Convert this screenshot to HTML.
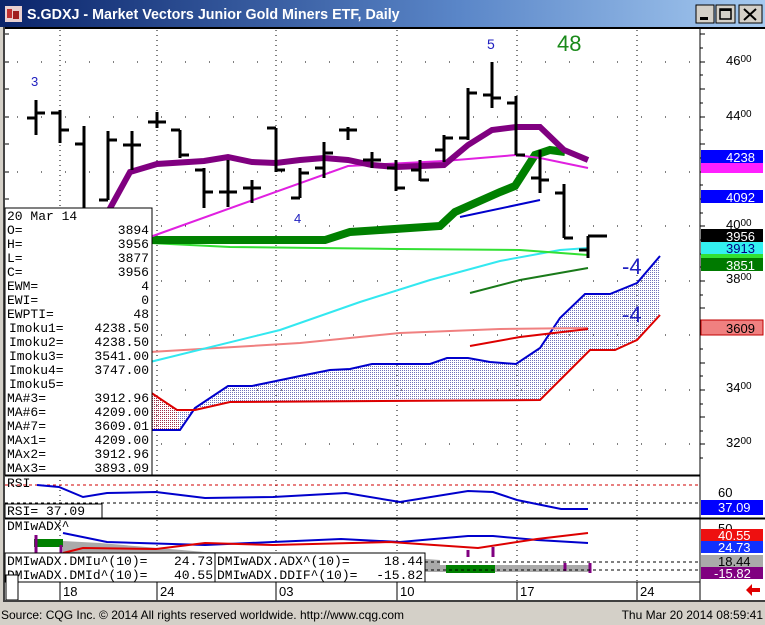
<!DOCTYPE html>
<html><head><meta charset="utf-8"><style>
html,body{margin:0;padding:0;background:#d4d0c8;}
svg{display:block}
text{font-family:"Liberation Sans",sans-serif;}
.m, .m text{font-family:"Liberation Mono",monospace;font-size:13px;fill:#000}
</style></head><body>
<svg width="765" height="625" viewBox="0 0 765 625" xmlns="http://www.w3.org/2000/svg">
<defs>
<linearGradient id="tb" x1="0" x2="1"><stop offset="0" stop-color="#0a246a"/><stop offset="0.6" stop-color="#5a86c8"/><stop offset="1" stop-color="#a6caf0"/></linearGradient>
<pattern id="dots" width="2" height="2" patternUnits="userSpaceOnUse"><rect width="1" height="1" fill="#000080"/></pattern>
<pattern id="rdots" width="2" height="2" patternUnits="userSpaceOnUse"><rect width="1" height="1" fill="#c00000"/></pattern>
</defs>
<rect width="765" height="625" fill="#d4d0c8"/>
<rect x="0" y="0" width="765" height="27" fill="url(#tb)"/>
<rect x="5" y="6" width="17" height="16" fill="#e8d0d0"/><rect x="7" y="9" width="5" height="9" fill="#c03030"/><rect x="13" y="11" width="6" height="8" fill="#a02020"/>
<text x="27" y="19" font-size="14.3" font-weight="bold" fill="#fff">S.GDXJ - Market Vectors Junior Gold Miners ETF, Daily</text>
<g stroke="#000" stroke-width="1">
<rect x="696" y="5" width="18" height="18" fill="#d4d0c8"/>
<rect x="716" y="5" width="19" height="18" fill="#d4d0c8"/>
<rect x="739" y="5" width="23" height="18" fill="#d4d0c8"/>
</g>
<rect x="700" y="17" width="8" height="3" fill="#000"/>
<rect x="720" y="9" width="11" height="10" fill="none" stroke="#000" stroke-width="1.5"/><rect x="720" y="9" width="11" height="2" fill="#000"/>
<path d="M744 9 L756 20 M756 9 L744 20" stroke="#000" stroke-width="2"/>
<rect x="3" y="27" width="762" height="575" fill="#fff"/>
<rect x="3" y="27" width="2" height="575" fill="#444"/>
<line x1="5" y1="28" x2="765" y2="28" stroke="#000" stroke-width="2"/>
<line x1="700" y1="28" x2="700" y2="600" stroke="#000" stroke-width="1"/>
<g stroke="#000" stroke-width="1" stroke-dasharray="1,4">
<line x1="60" y1="30" x2="60" y2="600"/><line x1="157" y1="30" x2="157" y2="600"/><line x1="276" y1="30" x2="276" y2="600"/><line x1="397" y1="30" x2="397" y2="600"/><line x1="517" y1="30" x2="517" y2="600"/><line x1="637" y1="30" x2="637" y2="600"/>
</g>
<g stroke="#000" stroke-width="1" stroke-dasharray="1,23" stroke-dashoffset="-12">
<line x1="5" y1="62" x2="700" y2="62"/><line x1="5" y1="117" x2="700" y2="117"/><line x1="5" y1="172" x2="700" y2="172"/><line x1="5" y1="226" x2="700" y2="226"/><line x1="5" y1="281" x2="700" y2="281"/><line x1="5" y1="335" x2="700" y2="335"/><line x1="5" y1="390" x2="700" y2="390"/><line x1="5" y1="444" x2="700" y2="444"/>
</g>
<g stroke="#000" stroke-width="1">
<path d="M700 34h5M700 48h3M700 62h5M700 75h3M700 89h5M700 103h3M700 117h5M700 130h3M700 144h5M700 158h3M700 172h5M700 185h3M700 199h5M700 213h3M700 226h5M700 240h3M700 254h5M700 267h3M700 281h5M700 295h3M700 308h5M700 322h3M700 335h5M700 349h3M700 363h5M700 376h3M700 390h5M700 404h3M700 417h5M700 431h3M700 444h5M700 458h3"/>
<path d="M5 34h4M5 62h4M5 89h4M5 117h4M5 144h4M5 172h4M5 199h4"/>
</g>
<polygon points="150,392 177,410 195,410 230,402 540,400 560,380 590,350 615,350 637,340 660,315 660,256 637,283 610,294 585,294 560,318 540,348 516,364 490,362 468,358 447,358 430,364 372,364 350,369 330,370 300,376 252,386 228,386 195,408 180,430 150,430" fill="url(#dots)" opacity="0.55"/>
<polygon points="150,392 177,410 180,430 150,430" fill="url(#rdots)" opacity="0.6"/>
<polyline points="150,430 180,430 195,408 228,386 252,386 300,376 330,370 350,369 372,364 430,364 447,358 468,358 490,362 516,364 540,348 560,318 585,294 610,294 637,283 660,256" fill="none" stroke="#0000cc" stroke-width="2"/>
<polyline points="150,392 177,410 195,410 230,402 540,400 560,380 590,350 615,350 637,340 660,315" fill="none" stroke="#dd0000" stroke-width="2"/>
<polyline points="150,352 300,343 400,333 500,329 588,328" fill="none" stroke="#f08080" stroke-width="2"/>
<polyline points="470,346 520,337 588,329" fill="none" stroke="#dd0000" stroke-width="2"/>
<polyline points="150,362 280,330 360,302 430,280 500,261 560,250 588,248" fill="none" stroke="#33e8f0" stroke-width="2"/>
<polyline points="470,293 520,280 588,268" fill="none" stroke="#1a7a1a" stroke-width="2"/>
<polyline points="150,243 230,247 400,249 520,250 588,255" fill="none" stroke="#33e033" stroke-width="2"/>
<polyline points="150,240 325,240 350,232 440,226 455,212 500,192 515,186 535,155 550,150 565,152" fill="none" stroke="#008000" stroke-width="8"/>
<polyline points="460,217 540,200" fill="none" stroke="#0000cc" stroke-width="2"/>
<polyline points="150,237 348,166 444,161 516,155 540,158 588,168" fill="none" stroke="#e020e0" stroke-width="2"/>
<polyline points="108,212 130,172 157,164 204,161 228,157 252,162 276,163 300,160 324,158 348,160 372,165 396,167 444,165 468,145 492,130 516,127 540,127 564,150 588,160" fill="none" stroke="#800080" stroke-width="6"/>
<g stroke="#000" stroke-width="3" fill="none">
<path d="M36 100V135M27 118H36M36 113H45"/>
<path d="M60 110V143M51 113H60M60 130H69"/>
<path d="M84 126V210M75 144H84"/>
<path d="M108 131V200M99 200H108M108 140H117"/>
<path d="M132 131V170M123 145H132M132 145H141"/>
<path d="M157 112V128M148 122H157M157 122H166"/>
<path d="M180 130V158M171 130H180M180 155H189"/>
<path d="M204 168V208M195 170H204M204 192H213"/>
<path d="M228 160V207M219 192H228M228 192H237"/>
<path d="M252 180V203M243 188H252M252 188H261"/>
<path d="M276 128V172M267 128H276M276 170H285"/>
<path d="M300 168V198M291 198H300M300 173H309"/>
<path d="M324 142V178M315 168H324M324 153H333"/>
<path d="M348 127V140M339 130H348M348 130H357"/>
<path d="M372 152V168M363 160H372M372 160H381"/>
<path d="M396 160V191M387 168H396M396 188H405"/>
<path d="M420 160V181M411 170H420M420 180H429"/>
<path d="M444 135V162M435 150H444M444 138H453"/>
<path d="M468 88V140M459 138H468M468 93H477"/>
<path d="M492 62V108M483 95H492M492 98H501"/>
<path d="M516 96V155M507 103H516M516 155H525"/>
<path d="M540 150V193M531 178H540M540 180H549"/>
<path d="M564 184V238M555 193H564M564 238H573"/>
<path d="M588 236V258M579 250H588M588 236H607"/>
</g>
<text x="31" y="86" font-size="13" fill="#2020c0">3</text>
<text x="487" y="49" font-size="14" fill="#2020c0">5</text>
<text x="557" y="51" font-size="22" fill="#1a8a1a">48</text>
<text x="294" y="223" font-size="13" fill="#2020c0">4</text>
<text x="622" y="274" font-size="22" fill="#2020c0">-4</text>
<text x="622" y="322" font-size="22" fill="#2020c0">-4</text>
<g font-size="13" fill="#000">
<text x="726" y="65">46<tspan font-size="10" dy="-3">00</tspan></text>
<text x="726" y="120">44<tspan font-size="10" dy="-3">00</tspan></text>
<text x="726" y="229">40<tspan font-size="10" dy="-3">00</tspan></text>
<text x="726" y="283">38<tspan font-size="10" dy="-3">00</tspan></text>
<text x="726" y="392">34<tspan font-size="10" dy="-3">00</tspan></text>
<text x="726" y="447">32<tspan font-size="10" dy="-3">00</tspan></text>
</g>
<g font-size="13">
<rect x="701" y="150" width="62" height="13" fill="#0000ff"/><text x="726" y="162" fill="#fff">4238</text>
<rect x="701" y="163" width="62" height="10" fill="#ff20ff"/>
<rect x="701" y="190" width="62" height="13" fill="#0000ff"/><text x="726" y="202" fill="#fff">4092</text>
<rect x="701" y="229" width="62" height="13" fill="#000"/><text x="726" y="241" fill="#fff">3956</text>
<rect x="701" y="242" width="62" height="12" fill="#33f0f0"/><text x="726" y="253" fill="#000080">3913</text>
<rect x="701" y="254" width="62" height="5" fill="#33e033"/>
<rect x="701" y="258" width="62" height="13" fill="#007a00"/><text x="726" y="270" fill="#fff">3851</text>
<rect x="701" y="320" width="62" height="15" fill="#f08080" stroke="#c00000"/><text x="726" y="333" fill="#000">3609</text>
</g>
<rect x="5" y="208" width="147" height="267" fill="#fff" stroke="#000"/>
<g class="m">
<text x="7" y="220">20 Mar 14</text>
<text x="7" y="234">O=</text><text x="149" y="234" text-anchor="end">3894</text>
<text x="7" y="248">H=</text><text x="149" y="248" text-anchor="end">3956</text>
<text x="7" y="262">L=</text><text x="149" y="262" text-anchor="end">3877</text>
<text x="7" y="276">C=</text><text x="149" y="276" text-anchor="end">3956</text>
<text x="7" y="290">EWM=</text><text x="149" y="290" text-anchor="end">4</text>
<text x="7" y="304">EWI=</text><text x="149" y="304" text-anchor="end">0</text>
<text x="7" y="318">EWPTI=</text><text x="149" y="318" text-anchor="end">48</text>
<text x="9" y="332">Imoku1=</text><text x="149" y="332" text-anchor="end">4238.50</text>
<text x="9" y="346">Imoku2=</text><text x="149" y="346" text-anchor="end">4238.50</text>
<text x="9" y="360">Imoku3=</text><text x="149" y="360" text-anchor="end">3541.00</text>
<text x="9" y="374">Imoku4=</text><text x="149" y="374" text-anchor="end">3747.00</text>
<text x="9" y="388">Imoku5=</text>
<text x="7" y="402">MA#3=</text><text x="149" y="402" text-anchor="end">3912.96</text>
<text x="7" y="416">MA#6=</text><text x="149" y="416" text-anchor="end">4209.00</text>
<text x="7" y="430">MA#7=</text><text x="149" y="430" text-anchor="end">3609.01</text>
<text x="7" y="444">MAx1=</text><text x="149" y="444" text-anchor="end">4209.00</text>
<text x="7" y="458">MAx2=</text><text x="149" y="458" text-anchor="end">3912.96</text>
<text x="7" y="472">MAx3=</text><text x="149" y="472" text-anchor="end">3893.09</text>
</g>
<line x1="5" y1="475.5" x2="700" y2="475.5" stroke="#000" stroke-width="2"/>
<line x1="5" y1="485" x2="700" y2="485" stroke="#d00000" stroke-dasharray="3,3"/>
<line x1="5" y1="503" x2="700" y2="503" stroke="#000" stroke-dasharray="3,3"/>
<polyline points="37,485 59,487 83,497 107,493 156,492 205,498 273,497 346,493 400,502 468,491 493,492 517,500 561,509 588,509" fill="none" stroke="#0000cc" stroke-width="2"/>
<text x="7" y="487" class="m">RSI</text>
<rect x="5" y="504" width="97" height="14" fill="#fff" stroke="#000"/>
<text x="7" y="515" class="m">RSI=  37.09</text>
<line x1="5" y1="518.5" x2="700" y2="518.5" stroke="#000" stroke-width="2"/>
<text x="718" y="497" font-size="13">60</text>
<rect x="701" y="500" width="62" height="15" fill="#0000ff"/><text x="718" y="512" font-size="13" fill="#fff">37.09</text>
<line x1="700" y1="518.5" x2="765" y2="518.5" stroke="#000" stroke-width="2"/>
<text x="7" y="530" class="m">DMIwADX^</text>
<polygon points="63,541 100,543 205,552 340,553 440,560 440,566 63,566" fill="#aaa"/>
<rect x="424" y="565" width="166" height="7" fill="#aaa"/>
<rect x="34" y="539" width="29" height="8" fill="#008000"/>
<rect x="446" y="565" width="49" height="8" fill="#008000"/>
<g stroke="#800080" stroke-width="3">
<path d="M36 535V553M61 545V553M468 550V557M493 547V557M565 563V571M590 563V573"/>
</g>
<polyline points="63,533 107,542 205,545 273,542 341,539 400,542 468,536 493,536 537,540 588,543" fill="none" stroke="#0000cc" stroke-width="2"/>
<polyline points="63,553 83,548 156,549 205,543 273,545 390,542 478,548 537,539 588,533" fill="none" stroke="#dd0000" stroke-width="2"/>
<line x1="5" y1="562" x2="700" y2="562" stroke="#000" stroke-dasharray="3,3"/>
<line x1="5" y1="570" x2="700" y2="570" stroke="#000" stroke-dasharray="3,3"/>
<rect x="5" y="553" width="210" height="29" fill="#fff" stroke="#000"/>
<rect x="215" y="553" width="210" height="29" fill="#fff" stroke="#000"/>
<g class="m">
<text x="7" y="565">DMIwADX.DMIu^(10)=</text><text x="213" y="565" text-anchor="end">24.73</text>
<text x="7" y="579">DMIwADX.DMId^(10)=</text><text x="213" y="579" text-anchor="end">40.55</text>
<text x="217" y="565">DMIwADX.ADX^(10)=</text><text x="423" y="565" text-anchor="end">18.44</text>
<text x="217" y="579">DMIwADX.DDIF^(10)=</text><text x="423" y="579" text-anchor="end">-15.82</text>
</g>
<text x="718" y="533" font-size="13">50</text>
<g font-size="13">
<rect x="701" y="529" width="62" height="12" fill="#ee1010"/><text x="718" y="540" fill="#fff">40.55</text>
<rect x="701" y="541" width="62" height="12" fill="#1030ff"/><text x="718" y="552" fill="#fff">24.73</text>
<rect x="701" y="555" width="62" height="12" fill="#aaa"/><text x="718" y="566" fill="#000">18.44</text>
<rect x="701" y="567" width="62" height="12" fill="#800080"/><text x="714" y="578" fill="#fff">-15.82</text>
</g>
<line x1="5" y1="582" x2="700" y2="582" stroke="#000"/>
<g stroke="#000"><path d="M60 582V600M157 582V600M276 582V600M397 582V600M517 582V600M637 582V600"/></g>
<g font-size="13" fill="#000">
<text x="63" y="596">18</text><text x="160" y="596">24</text><text x="279" y="596">03</text><text x="400" y="596">10</text><text x="520" y="596">17</text><text x="640" y="596">24</text>
</g>
<rect x="6" y="575" width="12" height="25" fill="#fff" stroke="#000"/>
<path d="M746 590 L752 584 V588 H760 V592 H752 V596 Z" fill="#e00000"/>
<line x1="3" y1="601" x2="765" y2="601" stroke="#404040" stroke-width="2"/>
<rect x="0" y="602" width="765" height="23" fill="#d4d0c8"/>
<text x="1" y="619" font-size="12" fill="#000">Source: CQG Inc. © 2014 All rights reserved worldwide. http://www.cqg.com</text>
<text x="763" y="619" font-size="12" fill="#000" text-anchor="end">Thu Mar 20 2014 08:59:41</text>
</svg>
</body></html>
